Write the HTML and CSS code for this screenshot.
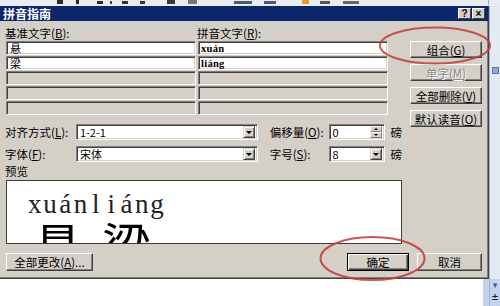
FILE: index.html
```html
<!DOCTYPE html>
<html lang="zh-CN">
<head>
<meta charset="utf-8">
<title>拼音指南</title>
<link rel="stylesheet" href="styles.css">
</head>
<body>
<div class="toolbar"></div>
<div class="main">
  <div class="left">
    <div class="dialog">
      <div class="titlebar">
        <span class="title">拼音指南</span>
        <span class="tb-btns"><span class="tb-btn">?</span><span class="tb-btn">×</span></span>
      </div>
      <div class="body">
        <div class="upper">
          <div class="leftcol">
            <div class="colheads"><span>基准文字(<u>B</u>):</span><span>拼音文字(<u>R</u>):</span></div>
            <div class="textgrid">
              <div class="cell">悬</div><div class="cell py">xuán</div>
              <div class="cell">梁</div><div class="cell py">liáng</div>
              <div class="cell dis"></div><div class="cell dis"></div>
              <div class="cell dis"></div><div class="cell dis"></div>
              <div class="cell dis"></div><div class="cell dis"></div>
            </div>
            <div class="formrow first">
              <span class="flabel">对齐方式(<u>L</u>):</span>
              <div class="field combo"><span class="val">1-2-1</span><span class="ddbtn"></span></div>
              <span class="flabel2">偏移量(<u>O</u>):</span>
              <div class="field spin"><span class="val">0</span><span class="spinbtns"><span class="up"></span><span class="down"></span></span></div>
              <span class="unit">磅</span>
            </div>
            <div class="formrow">
              <span class="flabel">字体(<u>F</u>):</span>
              <div class="field combo"><span class="val">宋体</span><span class="ddbtn"></span></div>
              <span class="flabel2">字号(<u>S</u>):</span>
              <div class="field spin"><span class="val">8</span><span class="ddbtn"></span></div>
              <span class="unit">磅</span>
            </div>
            <div class="plabel">预览</div>
            <div class="preview">
              <div class="ruby"><span class="rt"><span>x</span><span>u</span><span>á</span><span>n</span></span><span class="rb">悬</span></div>
              <div class="ruby"><span class="rt"><span>l</span><span>i</span><span>á</span><span>n</span><span>g</span></span><span class="rb">梁</span></div>
            </div>
          </div>
          <div class="btncol">
            <div class="btn">组合(<u>G</u>)</div>
            <div class="btn disabled">单字(<u>M</u>)</div>
            <div class="btn">全部删除(<u>V</u>)</div>
            <div class="btn">默认读音(<u>O</u>)</div>
          </div>
        </div>
        <div class="footer">
          <div class="btn btn-all">全部更改(<u>A</u>)...</div>
          <div class="btn btn-ok default">确定</div>
          <div class="btn btn-cancel">取消</div>
        </div>
      </div>
    </div>
    <div class="below"><span class="below-white"></span><span class="below-bar"></span></div>
  </div>
  <div class="strip">
    <span class="strip-icon"></span>
    <span class="strip-fill"></span>
    <span class="strip-bottom"><span class="arrow">▾</span><span class="pm">±</span></span>
  </div>
</div>
<svg class="marks" width="500" height="306" viewBox="0 0 500 306">
  <ellipse cx="435" cy="45.5" rx="55" ry="18" />
  <ellipse cx="372.5" cy="258.5" rx="52" ry="21.5" />
</svg>
</body>
</html>
```
FILE: styles.css
```css
* { box-sizing: border-box; margin: 0; padding: 0; }
html, body { width: 500px; height: 306px; overflow: hidden; background: #fff; }
body {
  position: relative;
  font-family: "Noto Sans CJK SC", "Liberation Sans", sans-serif;
  font-size: 12px;
  line-height: 12px;
  color: #000;
}
u { text-decoration: underline; text-underline-offset: 1px; }

.toolbar {
  height: 6px;
  background-color: #e9ecf2;
  background-image:
    linear-gradient(#2a2a2a, #2a2a2a),
    linear-gradient(#2a2a2a, #2a2a2a),
    linear-gradient(#2a2a2a, #2a2a2a),
    linear-gradient(#444, #444),
    linear-gradient(#333, #333),
    linear-gradient(#333, #333),
    linear-gradient(#3a3a3a, #3a3a3a),
    linear-gradient(#777, #777),
    linear-gradient(#4a5a7a, #4a5a7a),
    linear-gradient(#4a5a7a, #4a5a7a),
    linear-gradient(#e0a030, #e0a030),
    linear-gradient(#555, #555),
    linear-gradient(#666, #666),
    linear-gradient(#9aa, #9aa);
  background-size: 6px 4px, 3px 4px, 6px 3px, 2px 3px, 6px 3px, 5px 3px, 8px 4px, 9px 4px, 18px 3px, 12px 3px, 7px 4px, 10px 3px, 16px 3px, 1px 5px;
  background-position: 57px 0, 76px 0, 97px 1px, 110px 1px, 122px 1px, 140px 1px, 167px 0, 188px 0, 234px 1px, 264px 1px, 302px 0, 320px 1px, 343px 1px, 488px 0;
  background-repeat: no-repeat;
}

.main { display: flex; height: 300px; }
.left { width: 489px; display: flex; flex-direction: column; }

.dialog {
  height: 273px;
  background: #d4d0c8;
  border-right: 1px solid #404040;
  border-bottom: 1px solid #404040;
  box-shadow: inset -1px -1px #808080;
  display: flex;
  flex-direction: column;
}
.titlebar {
  height: 15px;
  background: #0c266c;
  display: flex;
  align-items: center;
  justify-content: space-between;
  padding: 0 3px 0 3px;
}
.title { color: #fff; font-weight: bold; font-size: 12px; line-height: 12px; }
.tb-btns { display: flex; gap: 1px; }
.tb-btn {
  width: 13px;
  height: 11px;
  background: #d4d0c8;
  border: 1px solid;
  border-color: #fff #404040 #404040 #fff;
  font: bold 10px/9px "Liberation Sans", sans-serif;
  text-align: center;
  color: #000;
}

.body { flex: 1; padding: 6px 5px 0 5px; display: flex; flex-direction: column; }
.upper { display: grid; grid-template-columns: 397px 72px; column-gap: 8px; }
.leftcol { display: flex; flex-direction: column; }

.colheads { display: grid; grid-template-columns: 192px auto; height: 12px; margin-bottom: 2px; font-size: 11.5px; }

.field {
  border: 1px solid;
  border-color: #808080 #fff #fff #808080;
  box-shadow: inset 1px 1px #404040, inset -1px -1px #d4d0c8;
  background: #fff;
}
.textgrid {
  display: grid;
  grid-template-columns: 190px 190px;
  column-gap: 2px;
  grid-auto-rows: 14px;
  row-gap: 1px;
  margin-left: 1px;
}
.cell {
  border: 1px solid;
  border-color: #808080 #fff #fff #808080;
  box-shadow: inset 1px 1px #404040, inset -1px -1px #d4d0c8;
  background: #fff;
  padding: 1px 0 0 3px;
  font-size: 11px;
  line-height: 11px;
}
.cell.py { font-family: "Liberation Serif", serif; font-size: 10.5px; font-weight: bold; padding-top: 1px; padding-left: 2px; letter-spacing: 0.3px; }
.cell.dis { background: #d4d0c8; }

.formrow { display: flex; align-items: center; height: 16px; margin-top: 6px; font-size: 11.5px; }
.formrow.first { margin-top: 9px; }
.flabel { width: 71px; }
.combo { width: 182px; height: 16px; display: flex; align-items: center; padding: 0 2px 0 3px; }
.val { flex: 1; font-size: 11px; line-height: 11px; }
.ddbtn {
  width: 12px;
  height: 12px;
  background: #d4d0c8;
  border: 1px solid;
  border-color: #d4d0c8 #404040 #404040 #d4d0c8;
  box-shadow: inset 1px 1px #fff, inset -1px -1px #808080;
  display: flex;
  align-items: center;
  justify-content: center;
}
.ddbtn::after {
  content: "";
  border-left: 3px solid transparent;
  border-right: 3px solid transparent;
  border-top: 3px solid #000;
}
.flabel2 { width: 59px; margin-left: 12px; }
.spin { width: 56px; height: 16px; display: flex; align-items: center; padding: 0 2px 0 3px; }
.spinbtns { width: 12px; height: 12px; display: flex; flex-direction: column; }
.spinbtns span {
  flex: 1;
  background: #d4d0c8;
  border: 1px solid;
  border-color: #fff #808080 #808080 #fff;
  display: flex;
  align-items: center;
  justify-content: center;
}
.spinbtns .up::after { content: ""; border-left: 2px solid transparent; border-right: 2px solid transparent; border-bottom: 2px solid #000; }
.spinbtns .down::after { content: ""; border-left: 2px solid transparent; border-right: 2px solid transparent; border-top: 2px solid #000; }
.unit { margin-left: 6px; }

.plabel { margin-top: 3px; height: 12px; font-size: 11.5px; }
.preview {
  margin-top: 3px;
  margin-left: 1px;
  width: 396px;
  height: 64px;
  border: 1px solid #3c3c3c;
  background: #fff;
  overflow: hidden;
  padding: 10px 0 0 20px;
  display: flex;
  align-items: flex-start;
}
.ruby { display: flex; flex-direction: column; align-items: center; }
.rt { display: flex; font-family: "Liberation Serif", serif; font-size: 27px; line-height: 26px; color: #222; }
.rt span { display: inline-block; width: 15.3px; text-align: center; }
.rb { font-family: "Noto Sans CJK SC", sans-serif; font-size: 50px; line-height: 50px; margin-top: 1px; }

.btncol { padding-top: 14px; display: flex; flex-direction: column; gap: 6px; }
.btn {
  height: 17px;
  background: #d4d0c8;
  border: 1px solid;
  border-color: #fff #404040 #404040 #fff;
  box-shadow: inset -1px -1px #808080;
  display: flex;
  align-items: center;
  justify-content: center;
  font-size: 11.5px;
  line-height: 12px;
}
.btn.disabled { color: #8a8a8a; text-shadow: 1px 1px #fff; }
.btn.default {
  border: 1px solid #000;
  box-shadow: inset 1px 1px #fff, inset -1px -1px #404040, inset -2px -2px #808080;
}

.footer { display: flex; margin-top: 9px; }
.footer .btn { height: 18px; }
.btn-all { width: 87px; margin-left: 1px; }
.btn-ok { width: 62px; margin-left: auto; }
.btn-cancel { width: 65px; margin-left: 8px; margin-right: 1px; }

.below { flex: 1; display: flex; }
.below-white { flex: 1; background: #fff; }
.below-bar { width: 6px; background: #c3d3ee; }

.strip {
  width: 11px;
  background: #e4eaf4;
  border-left: 1px solid #a4b4d0;
  display: flex;
  flex-direction: column;
  align-items: center;
}
.strip-icon { width: 7px; height: 7px; margin-top: 61px; background: #8fa8d8; border: 1px solid #5a78b0; }
.strip-fill { flex: 1; }
.strip-bottom {
  height: 27px;
  width: 100%;
  background: #c3d3ee;
  display: flex;
  flex-direction: column;
  align-items: center;
  font: bold 9px/12px "DejaVu Sans", sans-serif;
  color: #3a5a9a;
}
.pm { color: #223; }

.marks { position: absolute; left: 0; top: 0; pointer-events: none; }
.marks ellipse { fill: none; stroke: #c23a3a; stroke-width: 2; stroke-opacity: 0.85; }
```
